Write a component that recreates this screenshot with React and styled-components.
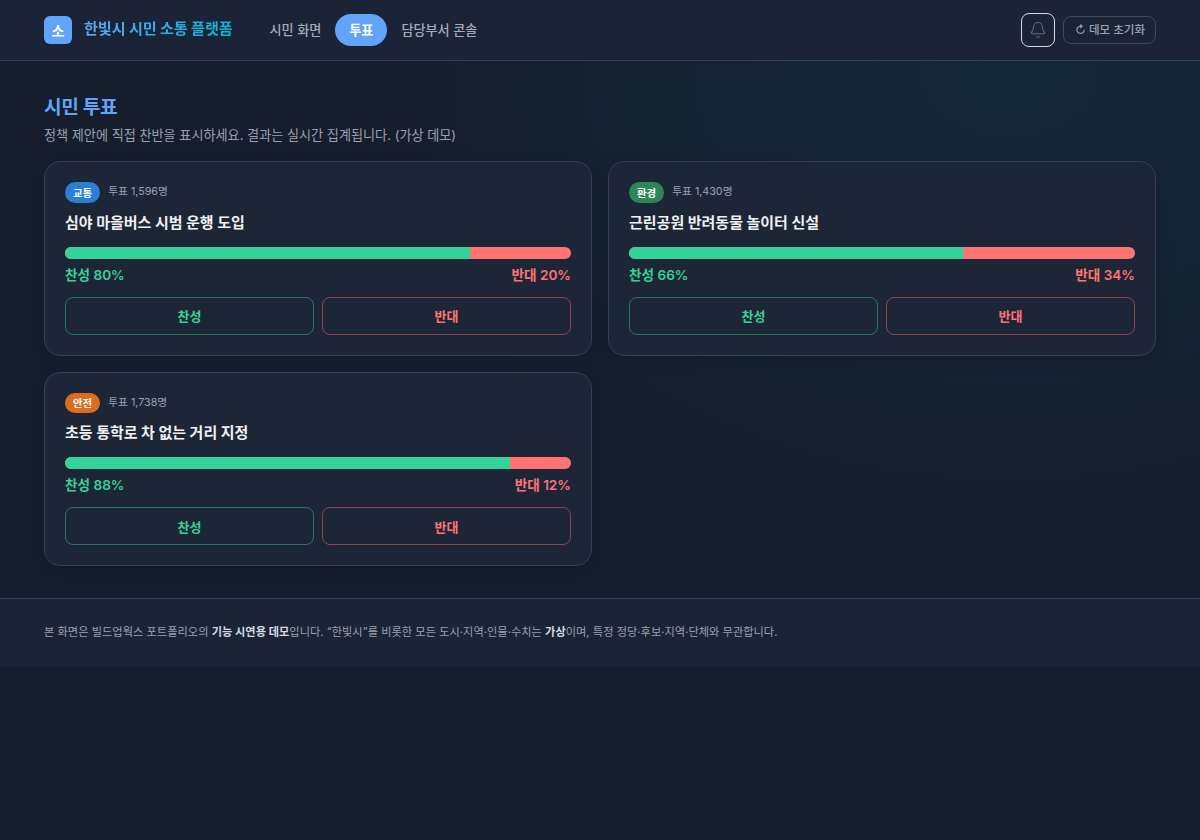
import React from 'react';
import styled, { createGlobalStyle } from 'styled-components';
import { Bell } from 'lucide-react';

const fontStack = 'Inter, "Noto Sans CJK KR", sans-serif';

const GlobalStyle = createGlobalStyle`
  * { box-sizing: border-box; }
  html, body { margin: 0; padding: 0; height: 100%; }
  body {
    background: #161d2c;
    color: #e8ecf3;
    font-family: ${fontStack};
    text-rendering: optimizeLegibility;
  }
`;

const Page = styled.div`
  min-height: 840px;
  background:
    radial-gradient(ellipse 640px 470px at 1010px 70px, rgba(18, 60, 72, 0.42), rgba(18, 60, 72, 0) 100%),
    #161d2c;
`;

const Header = styled.header`
  height: 61px;
  display: flex;
  align-items: center;
  padding: 0 44px;
  background: #1b2436;
  border-bottom: 1px solid #343e51;
`;

const Logo = styled.div`
  width: 28px;
  height: 28px;
  border-radius: 6px;
  background: #60a5fa;
  color: #fff;
  display: flex;
  align-items: center;
  justify-content: center;
  font-size: 14px;
  font-weight: 700;
`;

const Brand = styled.div`
  margin-left: 12px;
  padding-bottom: 2px;
  font-size: 15.2px;
  line-height: 26px;
  font-weight: 700;
  letter-spacing: -0.01em;
  background: linear-gradient(90deg, #60a5fa, #06b6d4);
  -webkit-background-clip: text;
  background-clip: text;
  color: transparent;
`;

const Nav = styled.nav`
  display: flex;
  align-items: center;
  margin-left: 23px;
`;

const NavItem = styled.a`
  height: 32px;
  padding: 0 14px 2px;
  display: flex;
  align-items: center;
  border-radius: 16px;
  font-size: 13.12px;
  font-weight: ${(p) => (p.$active ? 700 : 500)};
  color: ${(p) => (p.$active ? '#fff' : '#a3acb9')};
  background: ${(p) => (p.$active ? '#60a5fa' : 'transparent')};
`;

const Actions = styled.div`
  margin-left: auto;
  display: flex;
  align-items: center;
  gap: 8px;
`;

const BellButton = styled.button`
  width: 34px;
  height: 34px;
  padding: 0;
  display: flex;
  align-items: center;
  justify-content: center;
  background: transparent;
  border: 1px solid #d5dae2;
  border-radius: 8px;
  color: #5b6880;
`;

const ResetButton = styled.button`
  height: 28px;
  padding: 0 10px 2px 11px;
  display: flex;
  align-items: center;
  background: transparent;
  border: 1px solid #3e495c;
  border-radius: 8px;
  color: #98a2b1;
  font: 500 11.52px ${fontStack};
`;

const Main = styled.main`
  padding: 32px 44px;
`;

const Title = styled.h1`
  margin: 0;
  font-size: 19.2px;
  line-height: 28px;
  font-weight: 700;
  letter-spacing: -0.02em;
  color: #60a5fa;
`;

const Sub = styled.p`
  margin: 4px 0 16px;
  font-size: 13.12px;
  line-height: 20px;
  color: #98a2b1;
`;

const Grid = styled.div`
  display: grid;
  grid-template-columns: 1fr 1fr;
  gap: 16px;
`;

const Card = styled.section`
  padding: 20px;
  background: #1d2637;
  border: 1px solid #343e51;
  border-radius: 16px;
  box-shadow: 0 4px 16px rgba(0, 0, 0, 0.12);
`;

const Meta = styled.div`
  display: flex;
  align-items: flex-start;
  gap: 8px;
`;

const Badge = styled.span`
  height: 20.5px;
  padding: 0 8px;
  display: flex;
  align-items: center;
  border-radius: 11px;
  background: ${(p) => p.$color};
  color: #fff;
  font-size: 10.4px;
  font-weight: 700;
`;

const Count = styled.span`
  font-size: 10.72px;
  line-height: 19px;
  color: #98a2b1;
`;

const PollTitle = styled.h2`
  margin: 8px 0 0;
  font-size: 15px;
  line-height: 24px;
  font-weight: 700;
  color: #eef1f6;
`;

const Bar = styled.div`
  margin-top: 12px;
  height: 12px;
  display: flex;
  overflow: hidden;
  border-radius: 6px;
  background: #ff7373;
`;

const Fill = styled.div`
  height: 100%;
  background: #34d399;
`;

const Stats = styled.div`
  margin-top: 6px;
  display: flex;
  justify-content: space-between;
  font-size: 13.6px;
  line-height: 20px;
  font-weight: 600;
`;

const Stat = styled.span`
  color: ${(p) => (p.$against ? '#ff7373' : '#34d399')};
`;

const Buttons = styled.div`
  margin-top: 12px;
  display: grid;
  grid-template-columns: 1fr 1fr;
  gap: 8px;
`;

const VoteButton = styled.button`
  height: 38px;
  background: transparent;
  border: 1px solid ${(p) => (p.$against ? '#8a4450' : '#25755f')};
  border-radius: 8px;
  color: ${(p) => (p.$against ? '#ff7373' : '#34d399')};
  font: 700 13px ${fontStack};
`;

const Footer = styled.footer`
  padding: 23px 44px 25px;
  background: #1b2436;
  border-top: 1px solid #343e51;
  font-size: 11.2px;
  line-height: 20px;
  letter-spacing: 0.035px;
  color: #98a2b1;

  strong {
    color: #d5dae2;
    font-weight: 700;
  }
`;

const polls = [
  { tag: '교통', color: '#2b7fd4', count: '1,596', title: '심야 마을버스 시범 운행 도입', yes: 80 },
  { tag: '환경', color: '#2f855a', count: '1,430', title: '근린공원 반려동물 놀이터 신설', yes: 66 },
  { tag: '안전', color: '#dd6b20', count: '1,738', title: '초등 통학로 차 없는 거리 지정', yes: 88 },
];

export default function App() {
  return (
    <Page>
      <GlobalStyle />
      <Header>
        <Logo>소</Logo>
        <Brand>한빛시 시민 소통 플랫폼</Brand>
        <Nav>
          <NavItem>시민 화면</NavItem>
          <NavItem $active>투표</NavItem>
          <NavItem>담당부서 콘솔</NavItem>
        </Nav>
        <Actions>
          <BellButton aria-label="알림"><Bell size={18} strokeWidth={1.5} /></BellButton>
          <ResetButton>↻ 데모 초기화</ResetButton>
        </Actions>
      </Header>
      <Main>
        <Title>시민 투표</Title>
        <Sub>정책 제안에 직접 찬반을 표시하세요. 결과는 실시간 집계됩니다. (가상 데모)</Sub>
        <Grid>
          {polls.map((poll) => (
            <Card key={poll.tag}>
              <Meta>
                <Badge $color={poll.color}>{poll.tag}</Badge>
                <Count>투표 {poll.count}명</Count>
              </Meta>
              <PollTitle>{poll.title}</PollTitle>
              <Bar><Fill style={{ width: `${poll.yes}%` }} /></Bar>
              <Stats>
                <Stat>찬성 {poll.yes}%</Stat>
                <Stat $against>반대 {100 - poll.yes}%</Stat>
              </Stats>
              <Buttons>
                <VoteButton>찬성</VoteButton>
                <VoteButton $against>반대</VoteButton>
              </Buttons>
            </Card>
          ))}
        </Grid>
      </Main>
      <Footer>
        본 화면은 빌드업웍스 포트폴리오의 <strong>기능 시연용 데모</strong>입니다. “한빛시”를 비롯한 모든 도시·지역·인물·수치는 <strong>가상</strong>이며, 특정 정당·후보·지역·단체와 무관합니다.
      </Footer>
    </Page>
  );
}
